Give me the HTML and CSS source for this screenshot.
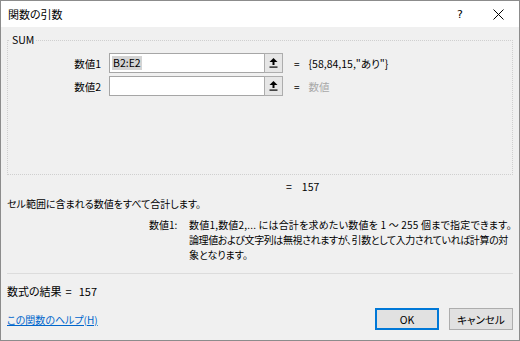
FILE: index.html
```html
<!DOCTYPE html>
<html lang="ja">
<head>
<meta charset="utf-8">
<title>関数の引数</title>
<link rel="stylesheet" href="styles.css">
</head>
<body>
<div class="window">
  <div class="titlebar">
    <span class="title">関数の引数</span>
    <span class="help-btn">?</span>
    <span class="close-btn"><svg width="11" height="11" viewBox="0 0 11 11"><path d="M0.5 0.5 L10.5 10.5 M10.5 0.5 L0.5 10.5" stroke="#000" stroke-width="1" fill="none"/></svg></span>
  </div>
  <div class="content">
    <fieldset class="group">
      <legend class="group-title">SUM</legend>
      <div class="args">
        <div class="arg-row">
          <span class="arg-label">数値1</span>
          <div class="ref-input">
            <span class="field"><span class="sel">B2:E2</span></span>
            <span class="ref-btn"><svg width="9" height="10" viewBox="0 0 9 10"><path d="M4.5 0 L8.5 4 L5.5 4 L5.5 7 L3.5 7 L3.5 4 L0.5 4 Z" fill="#000"/><rect x="0.5" y="8.5" width="8" height="1.2" fill="#000"/></svg></span>
          </div>
          <span class="eq">=</span>
          <span class="val">{58,84,15,"あり"}</span>
        </div>
        <div class="arg-row">
          <span class="arg-label">数値2</span>
          <div class="ref-input">
            <span class="field"></span>
            <span class="ref-btn"><svg width="9" height="10" viewBox="0 0 9 10"><path d="M4.5 0 L8.5 4 L5.5 4 L5.5 7 L3.5 7 L3.5 4 L0.5 4 Z" fill="#000"/><rect x="0.5" y="8.5" width="8" height="1.2" fill="#000"/></svg></span>
          </div>
          <span class="eq">=</span>
          <span class="val placeholder">数値</span>
        </div>
      </div>
    </fieldset>
    <div class="total"><span class="eq">=</span><span class="total-val">157</span></div>
    <p class="summary">セル範囲に含まれる数値をすべて合計します。</p>
    <div class="arg-help">
      <span class="ah-label">数値1:</span>
      <p class="ah-text"><span class="ah-line l1">数値1,数値2,... には合計を求めたい数値を 1 ～ 255 個まで指定できます。</span><span class="ah-line l2">論理値および文字列は無視されますが、引数として入力されていれば計算の対</span><span class="ah-line">象となります。</span></p>
    </div>
    <div class="sep"></div>
    <div class="result"><span>数式の結果</span><span class="r-eq">=</span><span class="r-val">157</span></div>
    <div class="footer">
      <a class="help-link" href="#">この関数のヘルプ(H)</a>
      <div class="buttons">
        <button class="btn btn-default">OK</button>
        <button class="btn">キャンセル</button>
      </div>
    </div>
  </div>
</div>
</body>
</html>
```

FILE: styles.css
```css
* { box-sizing: border-box; }
html, body { margin: 0; padding: 0; }
body {
  font-family: "Noto Sans CJK JP", "Noto Sans", sans-serif;
  font-size: 10px;
  font-feature-settings: "palt";
  color: #000;
  background: #f0f0f0;
}
.window {
  width: 520px;
  height: 341px;
  border: 1px solid #8c8c8c;
  background: #f0f0f0;
  display: flex;
  flex-direction: column;
}
.titlebar {
  height: 26px;
  background: #fff;
  display: flex;
  align-items: center;
  padding-left: 7px;
  flex: none;
}
.title { flex: 1; font-size: 11px; }
.help-btn {
  width: 12px;
  text-align: center;
  font-family: "DejaVu Sans", sans-serif;
  font-size: 11px;
  margin-right: 27px;
}
.close-btn {
  display: flex;
  margin-right: 15px;
}
.content {
  padding: 0 6px;
  flex: 1;
  display: flex;
  flex-direction: column;
}
.group {
  margin: 6px 0 0;
  padding: 0;
  border: 1px dotted #cfcfcf;
  height: 142px;
  min-width: 0;
}
.group-title {
  margin-left: 2px;
  padding: 0 2px;
  line-height: 14px;
  height: 14px;
  font-size: 10.5px;
}
.args {
  padding-top: 6px;
  display: flex;
  flex-direction: column;
  gap: 3px;
}
.arg-row {
  display: flex;
  align-items: center;
  height: 20px;
}
.arg-label {
  width: 93px;
  text-align: right;
  margin-right: 8px;
  font-size: 10.5px;
}
.ref-input {
  display: flex;
  height: 20px;
}
.field {
  width: 155px;
  height: 20px;
  background: #fff;
  border: 1px solid #a6a6a6;
  border-right: none;
  display: flex;
  align-items: center;
  padding-left: 2px;
}
.sel {
  background: #d4d4d4;
  padding: 0 1px;
  line-height: 14px;
  font-size: 10.5px;
}
.ref-btn {
  width: 19px;
  height: 20px;
  border: 1px solid #adadad;
  background: #e6e6e6;
  display: flex;
  align-items: center;
  justify-content: center;
}
.eq { margin-left: 11px; margin-right: 9px; }
.val { font-size: 10.5px; }
.placeholder { color: #a8a8a8; }
.total {
  margin-top: 5px;
  line-height: 14px;
  padding-left: 279px;
  display: flex;
  font-size: 10.5px;
}
.total .eq { margin-left: 0; margin-right: 10px; }
.summary {
  margin: 3px 0 0;
  line-height: 14px;
}
.arg-help {
  display: flex;
  margin-top: 6px;
  padding-left: 142px;
  line-height: 15px;
}
.ah-label { width: 32px; flex: none; margin-right: 8px; }
.ah-text { margin: 0; white-space: nowrap; }
.ah-line { display: block; }
.l1 { letter-spacing: 0.2px; }
.l2 { letter-spacing: -0.4px; }
.sep {
  height: 1px;
  background: #dcdcdc;
  margin-top: 11px;
}
.result {
  margin-top: 10px;
  line-height: 14px;
  display: flex;
  font-size: 11px;
}
.r-eq { margin-left: 4px; }
.r-val { margin-left: 7px; }
.footer {
  margin-top: 10px;
  display: flex;
  align-items: center;
  justify-content: space-between;
}
.help-link {
  color: #0066cc;
  text-decoration: underline;
}
.buttons { display: flex; gap: 10px; }
.btn {
  width: 64px;
  height: 22px;
  font-family: inherit;
  font-size: 10.5px;
  font-feature-settings: "palt";
  background: #e1e1e1;
  border: 1px solid #adadad;
  padding: 0;
  color: #000;
}
.btn-default {
  border: 2px solid #0078d7;
}
```
